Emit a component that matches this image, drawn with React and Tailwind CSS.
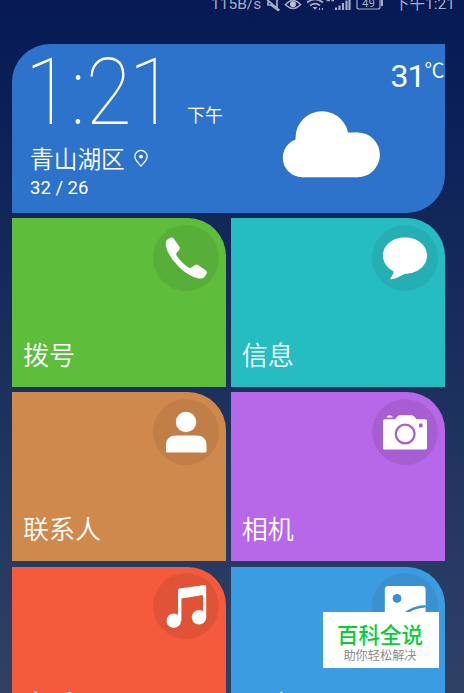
import clsx from 'clsx'

function PhoneIcon() {
  return (
    <svg viewBox="0 0 66 66" className="size-full" fill="#fff">
      <path d="M13.5 15.500Q15 13.500 18 12.600Q19.700 12.200 20.800 13.800L26.300 21.500Q27.200 23 26.300 24.500L23.300 28.500Q23 29.500 23.600 30.500Q28.500 38 35.500 42.500Q36.700 43.300 37.800 42.800L42 40Q43.500 39.100 45 40L52.700 45.300Q54.500 46.800 53.700 48.500L51.300 52.300Q49.500 54 45.500 53.500Q35 51 26 42Q15 31 12.900 21Q12.500 17.500 13.500 15.500Z" />
    </svg>
  )
}

function MessageIcon() {
  return (
    <svg viewBox="0 0 66 66" className="size-full" fill="#fff">
      <path d="M33 12.500C45.500 12.500 55 20.200 55 30.500C55 41 45.500 48.500 33 48.800C29 50.800 24.500 53.600 19.500 54.300Q18 54.300 18.600 53C20.500 50.500 21.600 48.500 21.600 46.500C15 43 11 37.500 11 30.500C11 20.200 20.500 12.500 33 12.500Z" />
    </svg>
  )
}

function ContactIcon() {
  return (
    <svg viewBox="0 0 66 66" className="size-full" fill="#fff">
      <circle cx="33" cy="23" r="10.200" />
      <path d="M13 52V46Q13 36.500 23.500 36.500H43Q53.500 36.500 53.500 46V52Q53.500 53.500 52 53.500H14.500Q13 53.500 13 52Z" />
    </svg>
  )
}

function CameraIcon() {
  return (
    <svg viewBox="0 0 66 66" className="size-full" fill="#fff">
      <path d="M14.500 18.500Q14.800 16.500 17 16.500H18.500Q20.500 16.500 20.800 18.500Z" />
      <path
        fillRule="evenodd"
        d="M12.500 20.300H23L25.500 17.300Q26.500 16.300 28 16.300H39.500Q41 16.300 42 17.300L44.500 20.300H53.500Q55 20.300 55 21.800V49Q55 50.500 53.500 50.500H12.500Q11 50.500 11 49V21.800Q11 20.300 12.500 20.300ZM47 24.500V28.300H50.500V24.500Z"
      />
      <circle cx="33.200" cy="35" r="9.400" fill="none" stroke="#a85ed3" strokeWidth="2.200" />
    </svg>
  )
}

function MusicIcon() {
  return (
    <svg viewBox="0 0 66 66" className="size-full" fill="#fff">
      <path d="M25 17.500Q25 16 26.500 15.500L51.500 11.900Q53.200 11.800 53.200 13.300V44.500H50V22L28.400 25.400V48H25Z" />
      <circle cx="20.800" cy="47.700" r="7.200" />
      <circle cx="46" cy="44.300" r="7.200" />
    </svg>
  )
}

function GalleryIcon() {
  return (
    <svg viewBox="0 0 66 66" className="size-full">
      <rect x="12.800" y="13" width="40.800" height="40" rx="3.500" fill="#fff" />
      <circle cx="25" cy="25.400" r="4.400" fill="#3a91d0" />
      <path d="M31 42Q41 33.500 53.600 33.200" fill="none" stroke="#3a91d0" strokeWidth="2.400" />
    </svg>
  )
}

const tiles = [
  { label: '拨号', color: 'bg-[#5ebd3b]', badge: 'bg-[#57ae38]', Icon: PhoneIcon },
  { label: '信息', color: 'bg-[#26bdc2]', badge: 'bg-[#25aeb4]', Icon: MessageIcon },
  { label: '联系人', color: 'bg-[#d0894c]', badge: 'bg-[#c17e47]', Icon: ContactIcon },
  { label: '相机', color: 'bg-[#b768e8]', badge: 'bg-[#a85ed3]', Icon: CameraIcon },
  { label: '音乐', color: 'bg-[#f45b3c]', badge: 'bg-[#e15336]', Icon: MusicIcon },
  { label: '图库', color: 'bg-[#3c9ce1]', badge: 'bg-[#3a91d0]', Icon: GalleryIcon },
]

function StatusBar() {
  return (
    <div className="-mt-[6px] flex h-[20px] shrink-0 items-center pl-[211px] text-[15.500px] leading-[20px] whitespace-nowrap text-[#a4acc6]">
      <span className="w-[54px]">115B/s</span>
      <svg viewBox="0 0 118 20" className="-mt-[2px] h-[20px] w-[118px]" fill="none" stroke="#a4acc6" strokeWidth="1.700">
        {/* muted bell */}
        <path d="M2 6.500L14.500 17.500M3 8.500V12H6L12 16.500V7L8 4" />
        {/* eye care */}
        <path d="M20.500 11.500Q28 3.500 35.500 11.500Q28 19.500 20.500 11.500Z" />
        <circle cx="28" cy="11.300" r="3" fill="#b9c0d4" stroke="none" />
        {/* wifi */}
        <path d="M42 9.500Q50 3.500 58 9.500M45 12.500Q50 8.800 55 12.500" />
        <path d="M47.500 14L50 17L52.500 14Z" fill="#a4acc6" stroke="none" />
        <path d="M54.500 15V17M57.500 15V17" strokeWidth="1.200" />
        {/* signal */}
        <path d="M61.500 7.500H65M66.500 7.500H69" />
        <path d="M71 14.500V17M74.500 12.500V17M78 10V17M81.500 7.500V17M84.500 4V17" strokeWidth="2.200" />
        {/* battery */}
        <rect x="92" y="1" width="23" height="15" rx="2" strokeWidth="1.200" />
        <path d="M117 6V13" strokeWidth="2" />
        <text x="103.500" y="14" fill="#a4acc6" stroke="none" fontSize="11.500" textAnchor="middle">
          49
        </text>
      </svg>
      <span className="ml-[11px]">下午1:21</span>
    </div>
  )
}

function WeatherCard() {
  return (
    <section className="flex h-[169px] justify-between rounded-tl-[38px] rounded-br-[38px] bg-[#2d73cc] text-white">
      <div className="pl-[18px]">
        <div className="flex h-[84px] items-end">
          <div className="-ml-[5px] w-[147px] pt-[6px]">
            <span className="-mb-[7px] block w-[147px] origin-left scale-x-90 text-[93px] leading-[84px] font-thin whitespace-nowrap">
              1:<span className="tracking-[-3px]">21</span>
            </span>
          </div>
          <span className="ml-[15px] text-[18px] leading-[24px] font-[350]">下午</span>
        </div>
        <div className="mt-[18px] flex h-[28px] items-center">
          <span className="text-[23.700px] leading-[28px] font-[350]">青山湖区</span>
          <svg viewBox="0 0 16 20" className="-mt-[3px] ml-[8px] h-[19px] w-[16px]" fill="none" stroke="#fff" strokeWidth="1.300">
            <path d="M8 18Q1.500 11.500 1.500 8A6.500 6.500 0 0 1 14.500 8Q14.500 11.500 8 18Z" />
            <circle cx="8" cy="8" r="2" fill="#fff" stroke="none" />
          </svg>
        </div>
        <p className="mt-[2px] text-[18.500px] leading-[24px]">32 / 26</p>
      </div>
      <div className="flex w-[163px] flex-col">
        <p className="mt-[12px] flex h-[40px] items-start justify-end whitespace-nowrap">
          <span className="text-[32px] leading-[40px] tracking-[-1px]">31</span>
          <span className="mt-[1px] text-[20px] leading-[28px] font-[350]">℃</span>
        </p>
        <svg viewBox="0 0 98 67" className="mt-[15px] h-[67px] w-[98px]" fill="#fff">
          <circle cx="40" cy="26.700" r="26.500" />
          <circle cx="20.300" cy="46.700" r="19.500" />
          <circle cx="75.500" cy="43.800" r="22.400" />
          <path d="M20 30L40 21.400H75.500V66.200H20Z" />
        </svg>
      </div>
    </section>
  )
}

function Tile({ label, color, badge, Icon }) {
  return (
    <div className={clsx('flex h-[169px] flex-col justify-between rounded-tr-[38px]', color)}>
      <div className={clsx('mt-[6.500px] mr-[7px] size-[66px] self-end rounded-full', badge)}>
        <Icon />
      </div>
      <span className="mb-[14px] ml-[11px] text-[26px] leading-[34px] font-[350] text-white">{label}</span>
    </div>
  )
}

export default function App() {
  return (
    <div className="relative flex h-[693px] w-[464px] flex-col overflow-hidden bg-linear-to-b from-[#061954] to-[#2f4165] font-[Roboto,'Noto_Sans_CJK_SC',sans-serif]">
      <StatusBar />
      <main className="mt-[30px] flex flex-col gap-[5px] pr-[19.500px] pl-[12px]">
        <WeatherCard />
        <div className="grid grid-cols-2 gap-x-[5px] gap-y-[5.400px]">
          {tiles.map((tile) => (
            <Tile key={tile.label} {...tile} />
          ))}
        </div>
      </main>
      <div className="absolute top-[612px] left-[323px] flex h-[56px] w-[116px] flex-col items-center bg-white">
        <span className="mt-[10px] -ml-[2px] text-[21.500px] leading-[28px] font-medium whitespace-nowrap text-[#05cf35]">百科全说</span>
        <span className="-ml-[2px] text-[12.200px] leading-[13px] whitespace-nowrap text-[#8c8c8c]">助你轻松解决</span>
      </div>
    </div>
  )
}
